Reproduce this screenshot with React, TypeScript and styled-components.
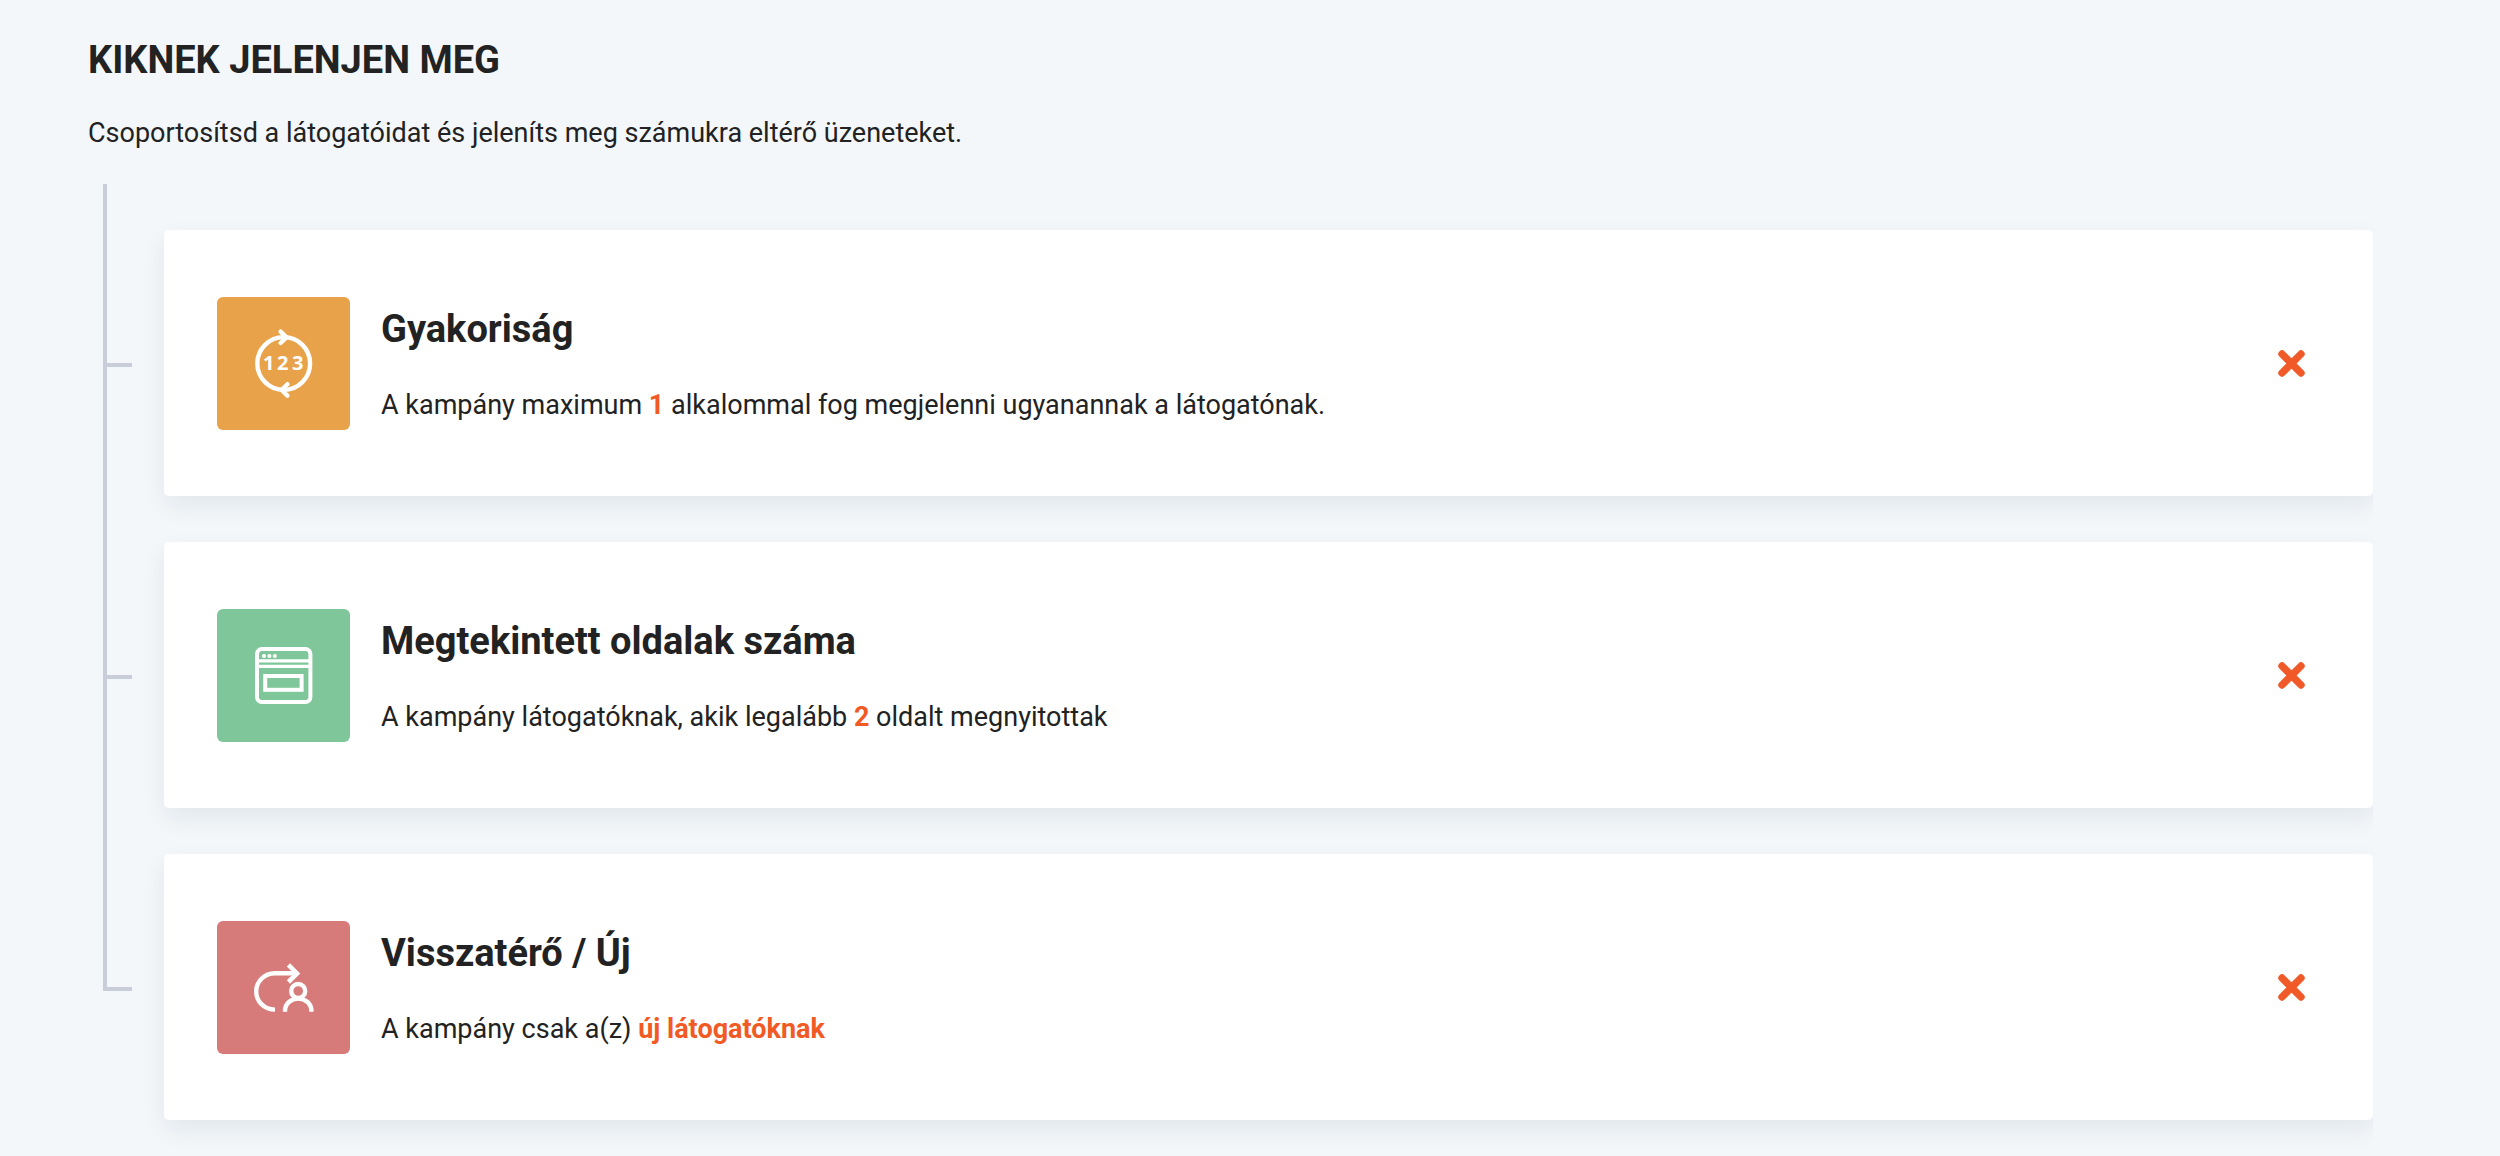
import React from "react";
import styled, { createGlobalStyle } from "styled-components";

const GlobalStyle = createGlobalStyle`
  *, *::before, *::after { box-sizing: border-box; }
  body {
    margin: 0;
    background: #f3f7fa;
    color: #222;
    font-family: Roboto, "Liberation Sans", sans-serif;
    -webkit-font-smoothing: antialiased;
  }
`;

const Page = styled.main`
  padding: 37px 127px 35px 88px;
`;

const Title = styled.h1`
  margin: 0;
  font-size: 38px;
  line-height: 46px;
  font-weight: 700;
  text-transform: uppercase;
`;

const Intro = styled.p`
  margin: 30px 0 31px;
  font-size: 27px;
  line-height: 40px;
`;

const RuleList = styled.ul`
  margin: 0;
  padding: 0 0 0 15px;
  list-style: none;
  overflow-x: clip;
`;

const Row = styled.li`
  display: flex;
`;

const Rail = styled.div`
  display: flex;
  flex-direction: column;
  width: 29px;
  margin-right: 32px;
`;

const Branch = styled.span`
  flex: 1 1 0;
  padding-top: 50px;
  border: solid #c9ccd9;
  border-width: 0 0 4px 4px;
`;

const Stem = styled.span<{ $hidden: boolean }>`
  flex: 1 1 0;
  border-left: 4px solid ${(p) => (p.$hidden ? "transparent" : "#c9ccd9")};
`;

const Card = styled.article`
  flex: 1;
  display: flex;
  align-items: center;
  margin-top: 46px;
  padding: 67px 68px 66px 53px;
  background: #fff;
  border-radius: 5px;
  box-shadow: 0 10px 24px rgba(20, 30, 40, 0.07);
`;

const Tile = styled.div<{ $color: string }>`
  display: flex;
  flex: none;
  width: 133px;
  height: 133px;
  border-radius: 6px;
  background: ${(p) => p.$color};
`;

const Body = styled.div`
  flex: 1;
  align-self: flex-start;
  padding: 9px 31px 0;
`;

const CardTitle = styled.h2`
  margin: 0;
  font-size: 38px;
  line-height: 46px;
  font-weight: 700;
`;

const Description = styled.p`
  margin: 33px 0 0;
  font-size: 27px;
  line-height: 40px;
`;

const Value = styled.strong`
  font-weight: 700;
  color: #f15a24;
`;

const RemoveButton = styled.button`
  display: flex;
  padding: 0;
  border: 0;
  background: none;
  color: #f05a28;
  cursor: pointer;
`;

const FrequencyIcon = () => (
  <svg width="133" height="133" viewBox="0 0 133 133" fill="none" stroke="#fff" strokeWidth="4.4" aria-hidden="true">
    <circle cx="66.7" cy="66.5" r="26.4" />
    <path d="M63.6 34.6l5.8 5.8-5.8 5.6M70.4 87.2l-5.8 5.8 5.8 5.6" strokeLinecap="round" strokeLinejoin="round" />
    <text x="46" y="73" fill="#fff" stroke="none" fontFamily="'Open Sans', 'Noto Sans', sans-serif" fontWeight="700" fontSize="20">1</text>
    <text x="60" y="73" fill="#fff" stroke="none" fontFamily="'Open Sans', 'Noto Sans', sans-serif" fontWeight="700" fontSize="20">2</text>
    <text x="75" y="73" fill="#fff" stroke="none" fontFamily="'Open Sans', 'Noto Sans', sans-serif" fontWeight="700" fontSize="20">3</text>
  </svg>
);

const PagesIcon = () => (
  <svg width="133" height="133" viewBox="0 0 133 133" fill="none" stroke="#fff" strokeWidth="4" aria-hidden="true">
    <rect x="40" y="40" width="53.4" height="53" rx="5" />
    <path d="M40 51.8h53M40 57.4h53" strokeWidth="3.2" />
    <rect x="48.2" y="67" width="36.4" height="13.8" />
    <g fill="#fff" stroke="none">
      <circle cx="47" cy="47" r="2.1" />
      <circle cx="52.4" cy="47" r="2.1" />
      <circle cx="57.8" cy="47" r="2.1" />
    </g>
  </svg>
);

const VisitorIcon = () => (
  <svg width="133" height="133" viewBox="0 0 133 133" fill="none" stroke="#fff" strokeWidth="4.4" aria-hidden="true">
    <path d="M58 88.6C47 88.6 39.2 80 39.2 70.4S47 52.2 58 52.2H79" />
    <path d="M71.4 43.8l8.6 8.6-8.6 8.6" strokeWidth="4.6" />
    <circle cx="81.2" cy="70" r="7" />
    <path d="M68 90.8v-1C68 82.6 74 77.6 81.2 77.6S94.4 82.6 94.4 89.8v1" />
  </svg>
);

const CrossIcon = () => (
  <svg width="27" height="27" viewBox="0 0 27 27" fill="none" stroke="currentColor" strokeWidth="7.4" strokeLinecap="round" aria-hidden="true">
    <path d="M4 4l19 19M23 4L4 23" />
  </svg>
);

const rules = [
  {
    title: "Gyakoriság",
    color: "#e8a24a",
    icon: <FrequencyIcon />,
    text: (
      <>
        A kampány maximum <Value>1</Value> alkalommal fog megjelenni ugyanannak a látogatónak.
      </>
    ),
  },
  {
    title: "Megtekintett oldalak száma",
    color: "#7fc79a",
    icon: <PagesIcon />,
    text: (
      <>
        A kampány látogatóknak, akik legalább <Value>2</Value> oldalt megnyitottak
      </>
    ),
  },
  {
    title: "Visszatérő / Új",
    color: "#d77b7a",
    icon: <VisitorIcon />,
    text: (
      <>
        A kampány csak a(z) <Value>új látogatóknak</Value>
      </>
    ),
  },
];

export default function App() {
  return (
    <>
      <GlobalStyle />
      <Page>
        <Title>Kiknek jelenjen meg</Title>
        <Intro>Csoportosítsd a látogatóidat és jeleníts meg számukra eltérő üzeneteket.</Intro>
        <RuleList>
          {rules.map((rule, i) => (
            <Row key={rule.title}>
              <Rail>
                <Branch />
                <Stem $hidden={i === rules.length - 1} />
              </Rail>
              <Card>
                <Tile $color={rule.color}>{rule.icon}</Tile>
                <Body>
                  <CardTitle>{rule.title}</CardTitle>
                  <Description>{rule.text}</Description>
                </Body>
                <RemoveButton type="button" aria-label={`${rule.title} törlése`}>
                  <CrossIcon />
                </RemoveButton>
              </Card>
            </Row>
          ))}
        </RuleList>
      </Page>
    </>
  );
}
